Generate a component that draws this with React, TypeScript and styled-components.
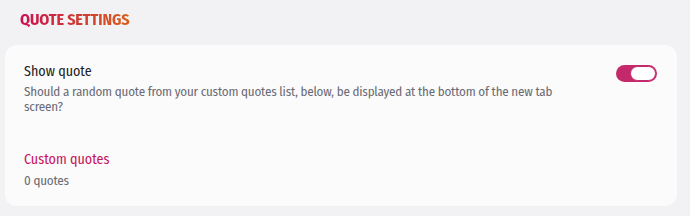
import React from "react";
import styled, { createGlobalStyle } from "styled-components";

const Global = createGlobalStyle`
  html, body { margin: 0; padding: 0; background: #f2f2f4; }
  body {
    font-family: "Fira Sans Condensed", "Fira Sans", Lato, sans-serif;
    -webkit-font-smoothing: antialiased;
  }
`;

const Page = styled.div`
  padding: 10px 13px 10px 5px;
  display: flex;
  flex-direction: column;
  gap: 15px;
`;

const Heading = styled.h2`
  margin: 0 0 0 15px;
  font-size: 16px;
  font-weight: 700;
  line-height: 20px;
  letter-spacing: -0.1px;
  background: linear-gradient(90deg, #c8124f 0%, #d75e1b 100%);
  -webkit-background-clip: text;
  background-clip: text;
  color: transparent;
  width: max-content;
`;

const Card = styled.section`
  background: #fbfbfc;
  border-radius: 12px;
  padding: 18px 20px 18px 19px;
  display: flex;
  flex-direction: column;
  gap: 37px;
`;

const Row = styled.div`
  display: flex;
  align-items: flex-start;
  justify-content: space-between;
  gap: 16px;
`;

const TextBlock = styled.div<{ $gap: number }>`
  display: flex;
  flex-direction: column;
  gap: ${(p) => p.$gap}px;
  max-width: 560px;
`;

const Label = styled.div<{ $accent?: boolean }>`
  font-size: 14px;
  line-height: 18px;
  color: ${(p) => (p.$accent ? "#c8125a" : "#1d1d22")};
`;

const Desc = styled.div`
  font-size: 13px;
  line-height: 15px;
  letter-spacing: -0.2px;
  color: #6b6b74;
`;

const Toggle = styled.button<{ $on: boolean }>`
  width: 41px;
  height: 17px;
  margin-top: 2px;
  border: none;
  padding: 1px;
  border-radius: 9px;
  background: #c42a6b;
  display: flex;
  justify-content: ${(p) => (p.$on ? "flex-end" : "flex-start")};
  cursor: pointer;
  flex-shrink: 0;
`;

const Knob = styled.span`
  width: 26px;
  height: 15px;
  box-sizing: border-box;
  border-radius: 8px;
  background: #ffffff;
  border: 1.5px solid #c42a6b;
`;

export default function App() {
  return (
    <>
      <Global />
      <Page>
        <Heading>QUOTE SETTINGS</Heading>
        <Card>
          <Row>
            <TextBlock $gap={3}>
              <Label>Show quote</Label>
              <Desc>
                Should a random quote from your custom quotes list, below, be displayed at the bottom of the new tab screen?
              </Desc>
            </TextBlock>
            <Toggle $on aria-label="Show quote">
              <Knob />
            </Toggle>
          </Row>
          <TextBlock $gap={4}>
            <Label $accent>Custom quotes</Label>
            <Desc>0 quotes</Desc>
          </TextBlock>
        </Card>
      </Page>
    </>
  );
}
